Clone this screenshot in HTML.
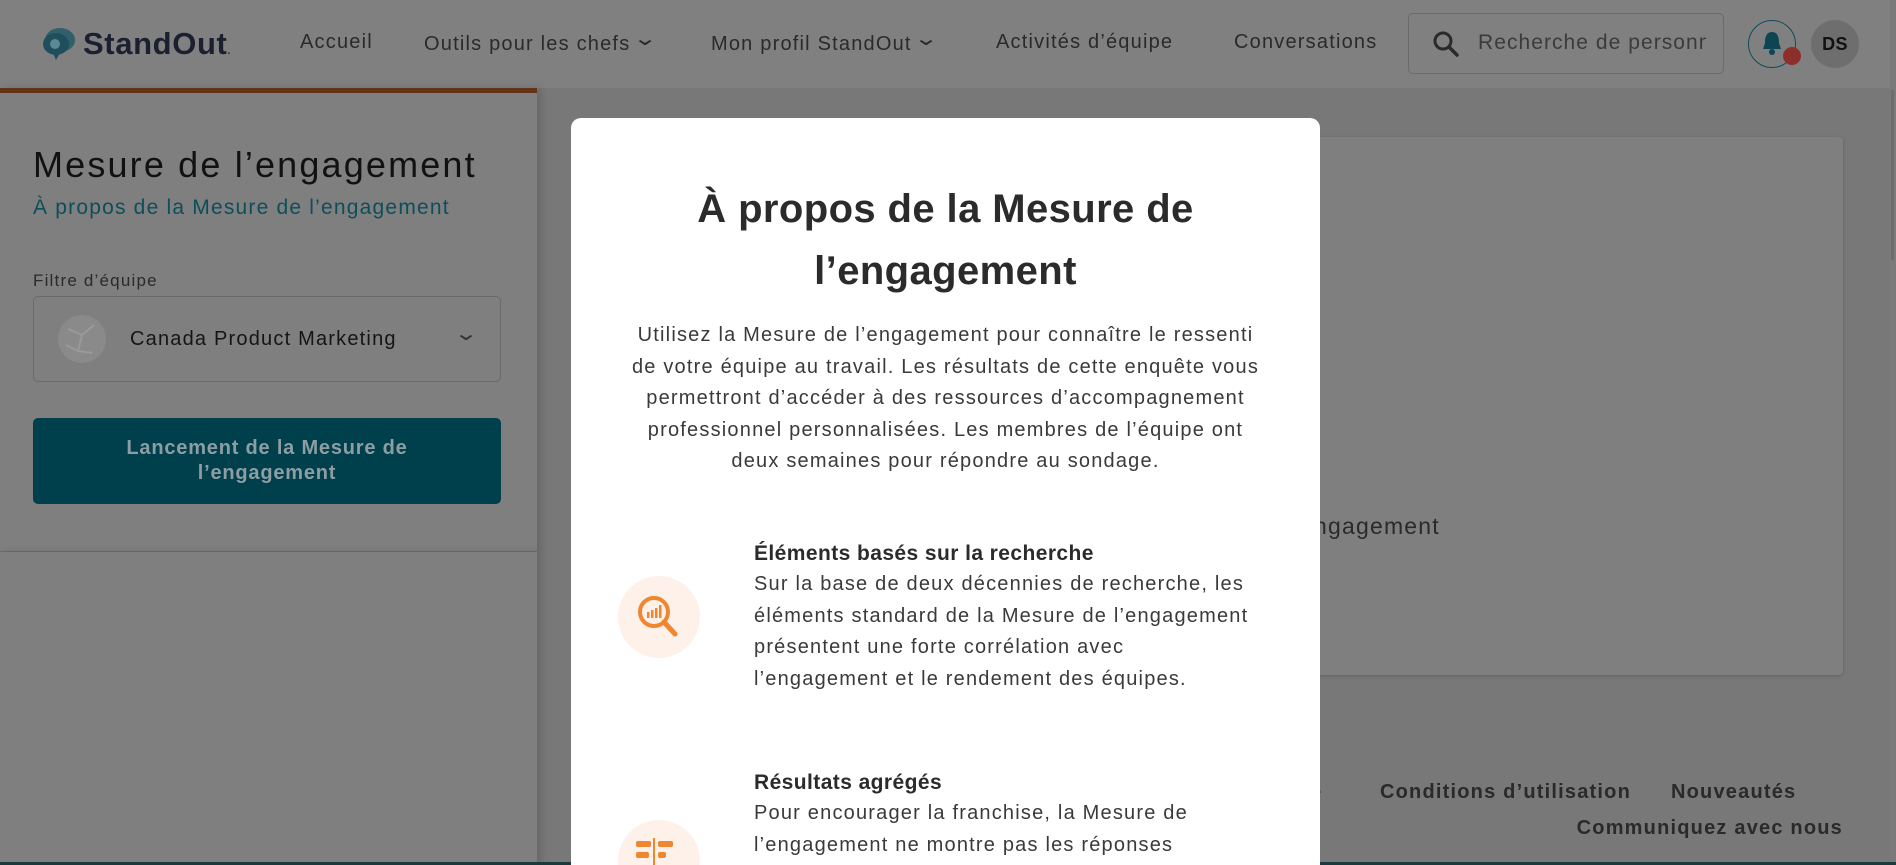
<!DOCTYPE html>
<html style="overflow:hidden;height:865px"><head><meta charset="utf-8"><style>
*{box-sizing:border-box;margin:0;padding:0}
html,body{width:1896px;height:865px;overflow:hidden}
body{background:#787878;font-family:"Liberation Sans",sans-serif;position:relative;color:#1e1e1e;letter-spacing:0.075em}
.a{position:absolute;white-space:nowrap}
.hdr{position:absolute;left:0;top:0;width:1890px;height:88px;background:#808080}
.nav{font-size:20px;color:#2a2a2a;top:31px}
.left{position:absolute;left:0;top:88px;width:537px;height:464px;background:#7f7f7f;border-top:5px solid #633418;border-bottom:1px solid #6e6e6e;box-shadow:4px 0 8px rgba(0,0,0,.15)}
.leftb{position:absolute;left:0;top:552px;width:537px;height:313px;background:#7f7f7f;box-shadow:4px 0 8px rgba(0,0,0,.15)}
.modal{position:absolute;left:571px;top:118px;width:749px;height:747px;background:#fff;border-radius:10px 10px 0 0}
.p{font-size:20px;color:#3a3a3a;line-height:31.5px}
.circ{position:absolute;width:82px;height:82px;border-radius:50%;background:#fdf1e9}
.chev{font-size:20px;display:inline-block;transform:translateY(-5px) scaleX(1.5)}
</style></head><body>
<div class="hdr"></div>
<svg class="a" style="left:41px;top:27px" width="36" height="34" viewBox="0 0 36 34"><ellipse cx="19" cy="13" rx="15" ry="12" fill="#315f6a"/><ellipse cx="15" cy="17" rx="13" ry="11" fill="#1f4f5d"/><path d="M12 26 L15 33 L19 26Z" fill="#1f4f5d"/><circle cx="14" cy="17" r="5" fill="#5b8a94"/></svg>
<div class="a" style="left:83px;top:26px;font-size:31px;font-weight:bold;color:#1b2030;letter-spacing:0.02em">StandOut<span style="font-size:10px">.</span></div>
<div class="a nav" style="left:300px">Accueil</div>
<div class="a nav" style="left:424px">Outils pour les chefs <span class="chev">&#8964;</span></div>
<div class="a nav" style="left:711px">Mon profil StandOut <span class="chev">&#8964;</span></div>
<div class="a nav" style="left:996px">Activités d’équipe</div>
<div class="a nav" style="left:1234px">Conversations</div>
<div class="a" style="left:1408px;top:13px;width:316px;height:61px;border:1px solid #6a6a6a;border-radius:5px"></div>
<svg class="a" style="left:1432px;top:30px" width="28" height="28" viewBox="0 0 28 28"><circle cx="11" cy="11" r="8" fill="none" stroke="#2a2a2a" stroke-width="3"/><path d="M17 17 L25 25" stroke="#2a2a2a" stroke-width="3.5" stroke-linecap="round"/></svg>
<div class="a" style="left:1478px;top:31px;font-size:21px;color:#3b3b3b;width:228px;overflow:hidden;letter-spacing:0.05em">Recherche de personnes</div>
<div class="a" style="left:1748px;top:20px;width:48px;height:48px;border-radius:50%;border:1.5px solid #0d4d5a"></div>
<svg class="a" style="left:1759px;top:30px" width="26" height="28" viewBox="0 0 26 28"><path d="M13 2 C7 2 6 8 6 13 L4 19 L22 19 L20 13 C20 8 19 2 13 2Z" fill="#0d4652"/><circle cx="13" cy="22" r="3" fill="#0d4652"/></svg>
<div class="a" style="left:1783px;top:47px;width:18px;height:18px;border-radius:50%;background:#8c2f2b"></div>
<div class="a" style="left:1811px;top:20px;width:48px;height:48px;border-radius:50%;background:#6e6e6e;color:#111;font-weight:bold;font-size:18px;text-align:center;line-height:48px;letter-spacing:0.02em">DS</div>
<div class="a" style="left:1890px;top:0;width:6px;height:865px;background:#7a7a7a"></div>
<div class="a" style="left:1891px;top:90px;width:3px;height:170px;background:#6c6c6c"></div>

<div class="left"></div><div class="leftb"></div>
<div class="a" style="left:33px;top:144px;font-size:36px;color:#111;letter-spacing:0.06em">Mesure de l’engagement</div>
<div class="a" style="left:33px;top:196px;font-size:21px;color:#0c4f5a">À propos de la Mesure de l’engagement</div>
<div class="a" style="left:33px;top:271px;font-size:17px;color:#2a2a2a">Filtre d’équipe</div>
<div class="a" style="left:33px;top:296px;width:468px;height:86px;border:1px solid #6a6a6a;border-radius:5px"></div>
<div class="a" style="left:58px;top:315px;width:48px;height:48px;border-radius:50%;background:#8a8a8a"></div>
<svg class="a" style="left:58px;top:315px" width="48" height="48" viewBox="0 0 48 48"><path d="M10 14 L24 20 L36 10 M24 20 L20 36 L34 38 M20 36 L8 30" stroke="#9a9a9a" stroke-width="2" fill="none"/></svg>
<div class="a" style="left:130px;top:328px;font-size:20px;color:#151515">Canada Product Marketing</div>
<div class="a" style="left:458px;top:326px;font-size:18px;color:#333"><span class="chev">&#8964;</span></div>
<div class="a" style="left:33px;top:418px;width:468px;height:86px;border-radius:5px;background:#003f4c;color:#8d9ea2;font-size:20px;font-weight:bold;text-align:center;line-height:25px;padding-top:18px;white-space:normal;letter-spacing:0.04em">Lancement de la Mesure de<br>l’engagement</div>

<div class="a" style="left:1300px;top:137px;width:543px;height:538px;background:#7f7f7f;border-radius:4px;box-shadow:0 1px 3px rgba(0,0,0,.2)"></div>
<div class="a" style="left:1300px;top:513px;font-size:23px;color:#2a2a2a">engagement</div>
<div class="a" style="left:1310px;top:781px;font-size:20px;color:#2a2a2a;font-weight:bold">é</div>
<div class="a" style="left:1380px;top:781px;font-size:20px;color:#2a2a2a;font-weight:bold">Conditions d’utilisation</div>
<div class="a" style="left:1671px;top:781px;font-size:20px;color:#2a2a2a;font-weight:bold">Nouveautés</div>
<div class="a" style="left:1540px;top:817px;font-size:20px;color:#2a2a2a;font-weight:bold;width:303px;text-align:right">Communiquez avec nous</div>
<div class="a" style="left:0;top:862px;width:1896px;height:3px;background:#1a3a40"></div>

<div class="modal"></div>
<div class="a" style="left:571px;top:178px;width:749px;text-align:center;font-size:40px;font-weight:bold;line-height:62px;color:#2b2b2b;white-space:normal;letter-spacing:0.01em">À propos de la Mesure de<br>l’engagement</div>
<div class="a p" style="left:571px;top:320px;width:749px;text-align:center;white-space:normal">Utilisez la Mesure de l’engagement pour connaître le ressenti<br>de votre équipe au travail. Les résultats de cette enquête vous<br>permettront d’accéder à des ressources d’accompagnement<br>professionnel personnalisées. Les membres de l’équipe ont<br>deux semaines pour répondre au sondage.</div>
<div class="circ" style="left:618px;top:576px"></div>
<svg class="a" style="left:632px;top:590px" width="54" height="54" viewBox="0 0 54 54"><circle cx="22" cy="22" r="14" fill="none" stroke="#f0862f" stroke-width="4"/><path d="M32 32 L43 44" stroke="#f0862f" stroke-width="5" stroke-linecap="round"/><rect x="15" y="22" width="2.5" height="6" fill="#f0862f"/><rect x="19" y="20" width="2.5" height="8" fill="#f0862f"/><rect x="23" y="18" width="2.5" height="10" fill="#f0862f"/><rect x="27" y="15" width="2.5" height="13" fill="#f0862f"/></svg>
<div class="a" style="left:754px;top:542px;font-size:21px;font-weight:bold;color:#2b2b2b;letter-spacing:0.02em">Éléments basés sur la recherche</div>
<div class="a p" style="left:754px;top:569px">Sur la base de deux décennies de recherche, les<br>éléments standard de la Mesure de l’engagement<br>présentent une forte corrélation avec<br>l’engagement et le rendement des équipes.</div>
<div class="circ" style="left:618px;top:820px"></div>
<svg class="a" style="left:636px;top:838px" width="46" height="30" viewBox="0 0 46 30"><rect x="0" y="3" width="15" height="6" rx="2" fill="#f0862f"/><rect x="22" y="3" width="15" height="6" rx="2" fill="#f0862f"/><rect x="0" y="14" width="13" height="6" rx="2" fill="#f0862f"/><rect x="22" y="14" width="8" height="6" rx="2" fill="#f0862f"/><rect x="17" y="0" width="2" height="30" fill="#f0862f"/></svg>
<div class="a" style="left:754px;top:771px;font-size:21px;font-weight:bold;color:#2b2b2b;letter-spacing:0.02em">Résultats agrégés</div>
<div class="a p" style="left:754px;top:798px">Pour encourager la franchise, la Mesure de<br>l’engagement ne montre pas les réponses</div>
</body></html>
